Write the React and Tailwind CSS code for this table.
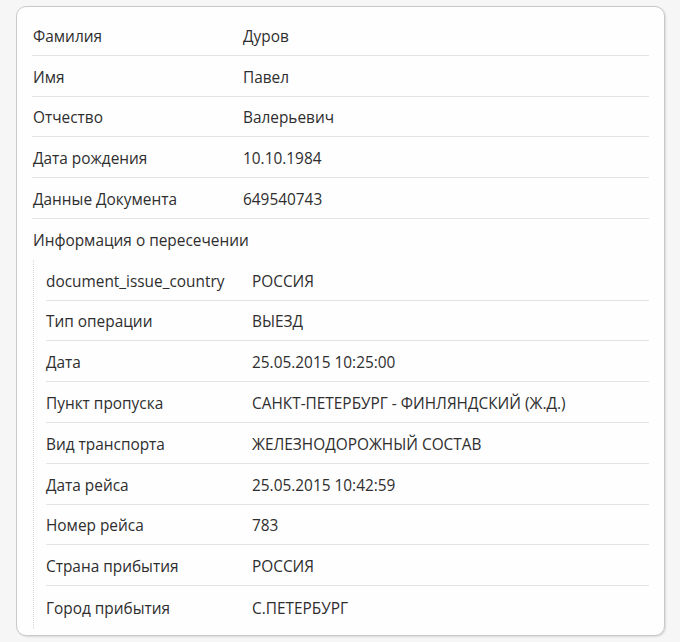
import React from "react";

const top = [
  ["Фамилия", "Дуров"],
  ["Имя", "Павел"],
  ["Отчество", "Валерьевич"],
  ["Дата рождения", "10.10.1984"],
  ["Данные Документа", "649540743"],
];

const nested = [
  ["document_issue_country", "РОССИЯ"],
  ["Тип операции", "ВЫЕЗД"],
  ["Дата", "25.05.2015 10:25:00"],
  ["Пункт пропуска", "САНКТ-ПЕТЕРБУРГ - ФИНЛЯНДСКИЙ (Ж.Д.)"],
  ["Вид транспорта", "ЖЕЛЕЗНОДОРОЖНЫЙ СОСТАВ"],
  ["Дата рейса", "25.05.2015 10:42:59"],
  ["Номер рейса", "783"],
  ["Страна прибытия", "РОССИЯ"],
  ["Город прибытия", "С.ПЕТЕРБУРГ"],
];

export default function App() {
  return (
    <div
      className="w-[680px] h-[642px] bg-[#f6f6f6] pt-[6px] pl-[16px] text-[15.4px] text-[#2e2e2e]"
      style={{ fontFamily: '"Open Sans", "Noto Sans", sans-serif' }}
    >
      <div className="w-[649px] h-[630px] bg-[#fefefe] border border-[#c9c9c9] rounded-[10px] shadow-[1px_1px_2px_rgba(0,0,0,0.12)] px-[15px] pt-[8px]">
        {top.map(([k, v]) => (
          <div key={k} className="flex h-[40.8px] items-center pt-[3px] border-b border-[#e3e3e3] pl-[1px]">
            <div className="w-[210px]">{k}</div>
            <div>{v}</div>
          </div>
        ))}
        <div className="flex h-[40.8px] items-center pt-[3px] pl-[1px]">Информация о пересечении</div>
        <div className="ml-[1px] border-l border-dotted border-[#d6d6d6] pl-[12px] pb-[2px]">
          {nested.map(([k, v], i) => (
            <div
              key={k}
              className={
                "flex h-[40.8px] items-center pt-[3px] " +
                (i < nested.length - 1 ? "border-b border-[#e3e3e3]" : "")
              }
            >
              <div className="w-[206px]">{k}</div>
              <div>{v}</div>
            </div>
          ))}
        </div>
      </div>
    </div>
  );
}
